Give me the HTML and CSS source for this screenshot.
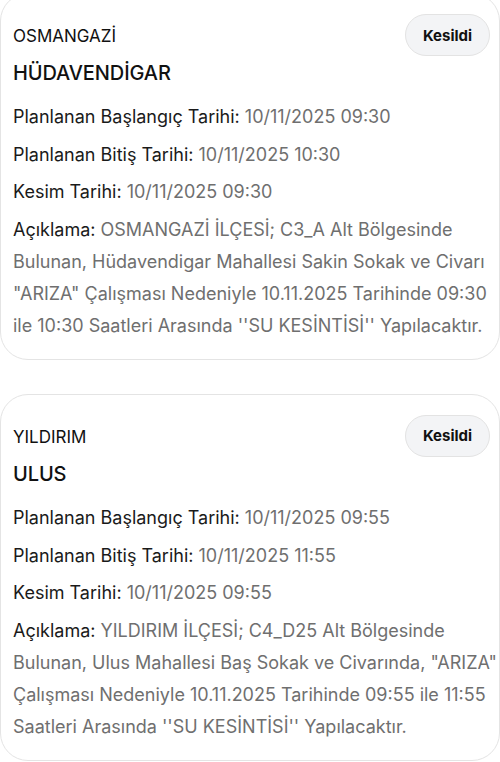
FILE: index.html
```html
<!DOCTYPE html>
<html lang="tr">
<head>
<meta charset="utf-8">
<link rel="stylesheet" href="styles.css">
</head>
<body>
<div class="list">
  <div class="card">
    <div class="head">
      <div class="place">
        <div class="district">OSMANGAZİ</div>
        <div class="hood">HÜDAVENDİGAR</div>
      </div>
      <span class="badge">Kesildi</span>
    </div>
    <div class="rows">
      <p class="row"><span class="lbl">Planlanan Başlangıç Tarihi:</span> <span class="val">10/11/2025 09:30</span></p>
      <p class="row"><span class="lbl">Planlanan Bitiş Tarihi:</span> <span class="val">10/11/2025 10:30</span></p>
      <p class="row"><span class="lbl">Kesim Tarihi:</span> <span class="val">10/11/2025 09:30</span></p>
      <p class="row"><span class="lbl">Açıklama:</span> <span class="val">OSMANGAZİ İLÇESİ; C3_A Alt Bölgesinde Bulunan, Hüdavendigar Mahallesi Sakin Sokak ve Civarı "ARIZA" Çalışması Nedeniyle 10.11.2025 Tarihinde 09:30 ile 10:30 Saatleri Arasında ''SU KESİNTİSİ'' Yapılacaktır.</span></p>
    </div>
  </div>
  <div class="card">
    <div class="head">
      <div class="place">
        <div class="district">YILDIRIM</div>
        <div class="hood">ULUS</div>
      </div>
      <span class="badge">Kesildi</span>
    </div>
    <div class="rows">
      <p class="row"><span class="lbl">Planlanan Başlangıç Tarihi:</span> <span class="val">10/11/2025 09:55</span></p>
      <p class="row"><span class="lbl">Planlanan Bitiş Tarihi:</span> <span class="val">10/11/2025 11:55</span></p>
      <p class="row"><span class="lbl">Kesim Tarihi:</span> <span class="val">10/11/2025 09:55</span></p>
      <p class="row"><span class="lbl">Açıklama:</span> <span class="val">YILDIRIM İLÇESİ; C4_D25 Alt Bölgesinde Bulunan, Ulus Mahallesi Baş Sokak ve Civarında, "ARIZA" Çalışması Nedeniyle 10.11.2025 Tarihinde 09:55 ile 11:55 Saatleri Arasında ''SU KESİNTİSİ'' Yapılacaktır.</span></p>
    </div>
  </div>
</div>
</body>
</html>
```
FILE: styles.css
```css
html, body {
  margin: 0;
  padding: 0;
  background: #ffffff;
}
body {
  font-family: Inter, "Noto Sans", sans-serif;
  color: #1a1a1a;
  overflow: hidden;
}
.list {
  display: flex;
  flex-direction: column;
  gap: 34px;
  margin-top: -7px;
}
.card {
  border: 1px solid #e4e4e4;
  border-radius: 28px;
  padding: 20px 2px 17px 12px;
  background: #fff;
}
.head {
  display: flex;
  justify-content: space-between;
  align-items: flex-start;
}
.district {
  font-size: 17px;
  line-height: 44px;
  color: #111;
}
.hood {
  font-size: 20px;
  line-height: 30px;
  font-weight: 500;
  color: #111;
  letter-spacing: -0.1px;
}
.badge {
  display: inline-flex;
  align-items: center;
  justify-content: center;
  box-sizing: border-box;
  height: 42px;
  width: 85px;
  margin-right: 7px;
  border-radius: 21px;
  background: #f3f4f6;
  border: 1px solid #e3e3e3;
  font-size: 15px;
  font-weight: 700;
  color: #111;
}
.rows {
  margin-top: 13px;
  display: flex;
  flex-direction: column;
  gap: 5.67px;
}
.row {
  margin: 0;
  font-size: 18px;
  line-height: 32px;
}
.lbl {
  color: #1a1a1a;
}
.val {
  color: #6f6f6f;
}
```
